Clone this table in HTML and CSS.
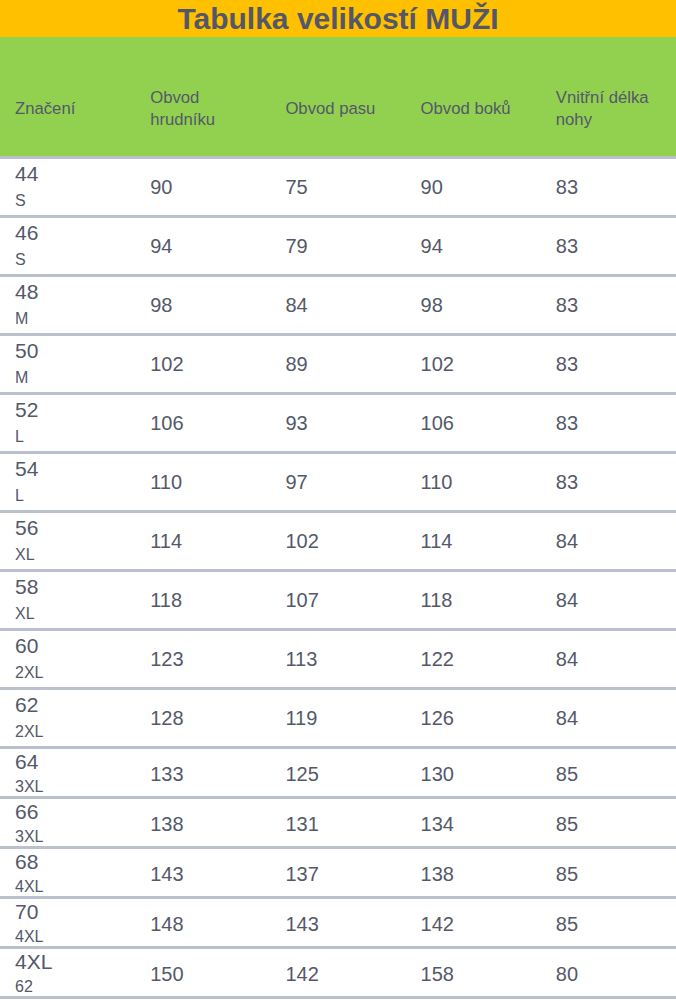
FILE: index.html
```html
<!DOCTYPE html>
<html lang="cs">
<head>
<meta charset="utf-8">
<title>Tabulka velikostí MUŽI</title>
<link rel="stylesheet" href="styles.css">
</head>
<body>
<div class="sheet">
  <h1 class="title">Tabulka velikostí MUŽI</h1>
  <div class="row head">
    <div class="cell">Značení</div>
    <div class="cell">Obvod hrudníku</div>
    <div class="cell">Obvod pasu</div>
    <div class="cell">Obvod boků</div>
    <div class="cell">Vnitřní délka nohy</div>
  </div>
  <div class="row tall"><div class="cell label"><span class="num">44</span><span class="size">S</span></div><div class="cell">90</div><div class="cell">75</div><div class="cell">90</div><div class="cell">83</div></div>
  <div class="row tall"><div class="cell label"><span class="num">46</span><span class="size">S</span></div><div class="cell">94</div><div class="cell">79</div><div class="cell">94</div><div class="cell">83</div></div>
  <div class="row tall"><div class="cell label"><span class="num">48</span><span class="size">M</span></div><div class="cell">98</div><div class="cell">84</div><div class="cell">98</div><div class="cell">83</div></div>
  <div class="row tall"><div class="cell label"><span class="num">50</span><span class="size">M</span></div><div class="cell">102</div><div class="cell">89</div><div class="cell">102</div><div class="cell">83</div></div>
  <div class="row tall"><div class="cell label"><span class="num">52</span><span class="size">L</span></div><div class="cell">106</div><div class="cell">93</div><div class="cell">106</div><div class="cell">83</div></div>
  <div class="row tall"><div class="cell label"><span class="num">54</span><span class="size">L</span></div><div class="cell">110</div><div class="cell">97</div><div class="cell">110</div><div class="cell">83</div></div>
  <div class="row tall"><div class="cell label"><span class="num">56</span><span class="size">XL</span></div><div class="cell">114</div><div class="cell">102</div><div class="cell">114</div><div class="cell">84</div></div>
  <div class="row tall"><div class="cell label"><span class="num">58</span><span class="size">XL</span></div><div class="cell">118</div><div class="cell">107</div><div class="cell">118</div><div class="cell">84</div></div>
  <div class="row tall"><div class="cell label"><span class="num">60</span><span class="size">2XL</span></div><div class="cell">123</div><div class="cell">113</div><div class="cell">122</div><div class="cell">84</div></div>
  <div class="row tall"><div class="cell label"><span class="num">62</span><span class="size">2XL</span></div><div class="cell">128</div><div class="cell">119</div><div class="cell">126</div><div class="cell">84</div></div>
  <div class="row short"><div class="cell label"><span class="num">64</span><span class="size">3XL</span></div><div class="cell">133</div><div class="cell">125</div><div class="cell">130</div><div class="cell">85</div></div>
  <div class="row short"><div class="cell label"><span class="num">66</span><span class="size">3XL</span></div><div class="cell">138</div><div class="cell">131</div><div class="cell">134</div><div class="cell">85</div></div>
  <div class="row short"><div class="cell label"><span class="num">68</span><span class="size">4XL</span></div><div class="cell">143</div><div class="cell">137</div><div class="cell">138</div><div class="cell">85</div></div>
  <div class="row short"><div class="cell label"><span class="num">70</span><span class="size">4XL</span></div><div class="cell">148</div><div class="cell">143</div><div class="cell">142</div><div class="cell">85</div></div>
  <div class="row short"><div class="cell label"><span class="num">4XL</span><span class="size">62</span></div><div class="cell">150</div><div class="cell">142</div><div class="cell">158</div><div class="cell">80</div></div>
</div>
</body>
</html>
```

FILE: styles.css
```css
* { box-sizing: border-box; }

html, body {
  margin: 0;
  padding: 0;
  background: #ffffff;
}

body {
  font-family: "Liberation Sans", Arial, sans-serif;
  color: #545969;
}

.sheet {
  width: 676px;
}

.title {
  margin: 0;
  height: 37px;
  line-height: 37px;
  background: #ffc000;
  text-align: center;
  font-size: 30px;
  font-weight: bold;
  color: #535767;
}

.row {
  display: grid;
  grid-template-columns: repeat(5, 1fr);
  border-bottom: 3px solid #bac0cc;
}

.cell {
  display: flex;
  flex-direction: column;
  justify-content: center;
  padding: 0 10px 0 15px;
  font-size: 20px;
}

.head {
  background: #92d050;
  height: 122px;
}

.head .cell {
  padding-top: 24px;
  font-size: 16.7px;
  line-height: 22px;
}

.tall {
  height: 59px;
}

.short {
  height: 50px;
}

.label .num {
  font-size: 21px;
}

.label .size {
  font-size: 16px;
}

.tall .label span {
  line-height: 27px;
}

.short .label span {
  line-height: 25px;
}
```
